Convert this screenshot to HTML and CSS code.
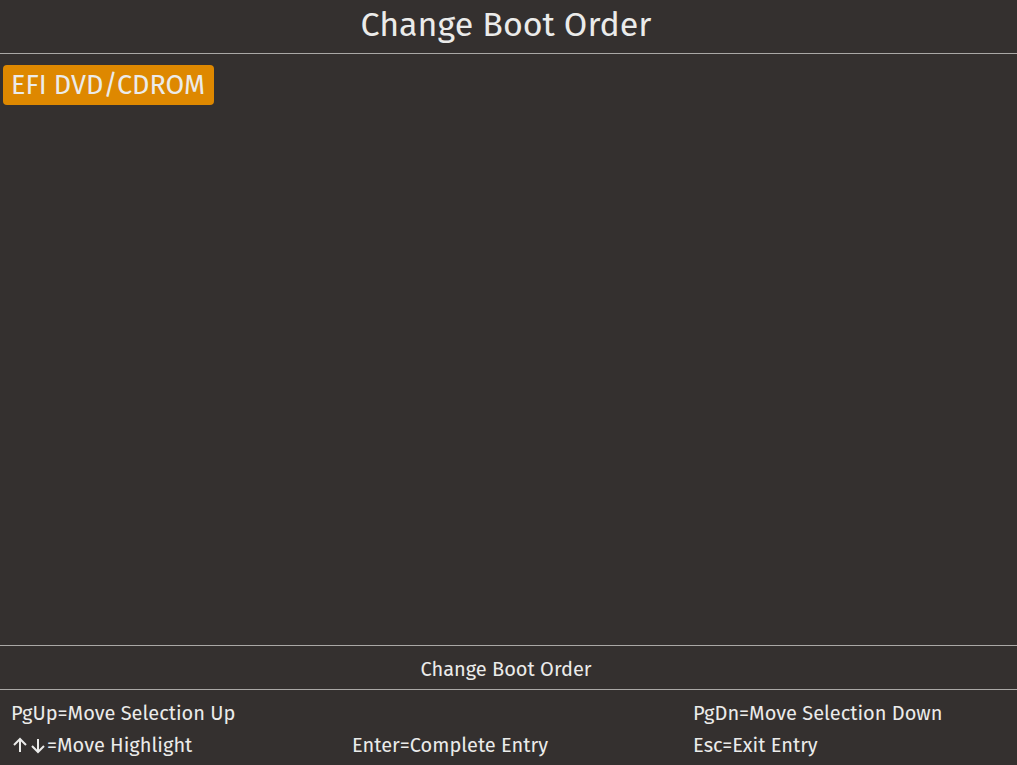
FILE: index.html
```html
<!DOCTYPE html>
<html lang="en">
<head>
<meta charset="utf-8">
<title>Change Boot Order</title>
<link rel="stylesheet" href="styles.css">
</head>
<body>
<header class="title-bar"><h1 class="title">Change Boot Order</h1></header>
<main class="boot-list"><button class="boot-item" type="button">EFI DVD/CDROM</button></main>
<footer>
<p class="help-text">Change Boot Order</p>
<div class="keys">
<span class="key">PgUp=Move Selection Up</span>
<span class="key"></span>
<span class="key">PgDn=Move Selection Down</span>
<span class="key"><svg class="arrows" viewBox="0 0 36 20" role="img" aria-label="Up and down arrows"><path d="M9 17V4.500M3 10l6-6 6 6M27 4v12.500M21 11l6 6 6-6"/></svg>=Move Highlight</span>
<span class="key">Enter=Complete Entry</span>
<span class="key">Esc=Exit Entry</span>
</div>
</footer>
</body>
</html>
```

FILE: styles.css
```css
body {
  display: flex;
  flex-direction: column;
  min-height: 100vh;
  margin: 0;
  background: #34302f;
  color: #ebebea;
  font-family: "Fira Sans", "Noto Sans", sans-serif;
  font-size: 20px;
  line-height: 32px;
}

.title-bar {
  padding: 1px 0 4px;
  border-bottom: 1px solid #aaa8a6;
}

.title {
  margin: 0;
  padding-right: 5px;
  font-size: 34px;
  font-weight: 400;
  line-height: 48px;
  text-align: center;
}

.boot-list {
  flex: 1;
  padding: 11px 3px;
}

.boot-item {
  padding: 0 9px 0 8px;
  border: 0;
  border-radius: 4px;
  background: #de8800;
  color: #ebebea;
  font: inherit;
  font-size: 27px;
  line-height: 40px;
}

.help-text {
  margin: 0;
  padding: 7px 5px 4px 0;
  border: solid #aaa8a6;
  border-width: 1px 0;
  text-align: center;
}

.keys {
  display: grid;
  grid-template-columns: 20fr 20fr 19fr;
  padding: 7px 0 4px 11px;
}

.key {
  display: flex;
  align-items: center;
}

.arrows {
  width: 36px;
  height: 20px;
  fill: none;
  stroke: currentColor;
  stroke-width: 2;
}
```
